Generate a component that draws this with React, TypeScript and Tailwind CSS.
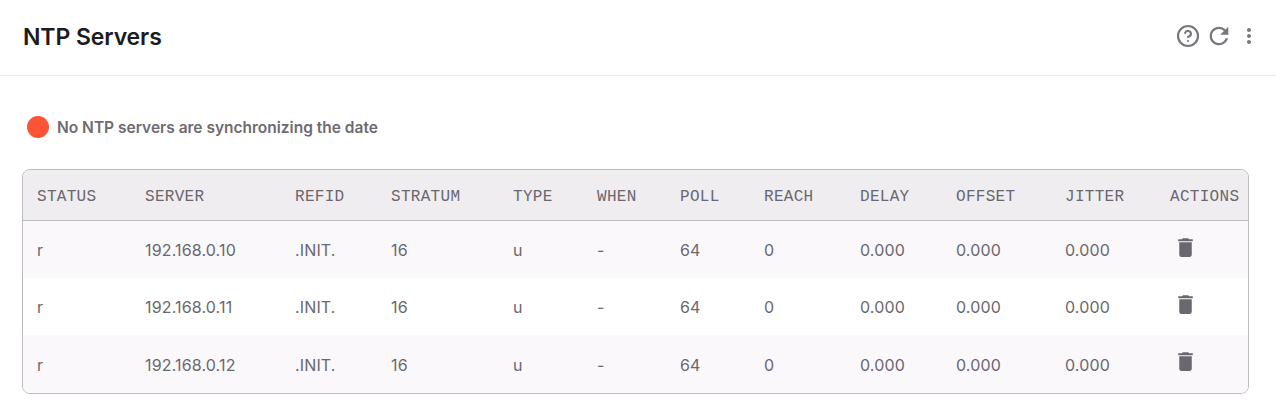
import { LuCircleHelp } from "react-icons/lu";
import { MdDelete, MdMoreVert, MdRefresh } from "react-icons/md";

const columns = [
  { label: "STATUS", width: "w-[108px]" },
  { label: "SERVER", width: "w-[150px]" },
  { label: "REFID", width: "w-[96px]" },
  { label: "STRATUM", width: "w-[122px]" },
  { label: "TYPE", width: "w-[84px]" },
  { label: "WHEN", width: "w-[83px]" },
  { label: "POLL", width: "w-[84px]" },
  { label: "REACH", width: "w-[96px]" },
  { label: "DELAY", width: "w-[96px]" },
  { label: "OFFSET", width: "w-[109px]" },
  { label: "JITTER", width: "w-[105px]" },
  { label: "ACTIONS", width: "" },
];

const servers = ["192.168.0.10", "192.168.0.11", "192.168.0.12"];

const App = () => {
  return (
    <div className="w-[1276px] h-[418px] bg-white font-['Inter',sans-serif] overflow-hidden">
      {/* Header */}
      <div className="flex items-center justify-between h-[76px] pl-[23px] pr-[15px] border-b border-[#e9e9ec]">
        <h1 className="text-[23px] font-semibold text-[#1c1b1f] tracking-[-0.1px]">NTP Servers</h1>
        <div className="flex items-center gap-[4.5px] -mt-[3px] text-[#79767d]">
          <LuCircleHelp size={24} strokeWidth={2.2} />
          <MdRefresh size={28} />
          <MdMoreVert size={24} />
        </div>
      </div>

      <div className="pt-[39px] px-[22px]">
        {/* Status */}
        <div className="flex items-center h-[24px] pl-[5px]">
          <span className="w-[22px] h-[22px] rounded-full bg-[#ff5338]" />
          <span className="ml-[8px] mt-[1px] text-[15.5px] font-semibold text-[#6d6a72]">
            No NTP servers are synchronizing the date
          </span>
        </div>

        {/* Table */}
        <div className="mt-[30px] w-[1227px] border border-[#bdbcbf] rounded-[8px] overflow-hidden">
          <table className="w-full table-fixed border-collapse">
            <thead>
              <tr className="h-[50px] bg-[#efedf0] border-b border-[#bdbcbf]">
                {columns.map((col) => (
                  <th
                    key={col.label}
                    className={`${col.width} pl-[14px] pt-[4px] text-left font-normal text-[16px] tracking-[0.3px] text-[#6a676e] font-['Liberation_Mono',monospace]`}
                  >
                    {col.label}
                  </th>
                ))}
              </tr>
            </thead>
            <tbody className="text-[16px] tracking-[0.15px] text-[#6a676e]">
              {servers.map((server, i) => (
                <tr key={server} className={`h-[57.6px] ${i % 2 === 0 ? "bg-[#faf8fb]" : "bg-white"}`}>
                  <td className="pl-[14px] pt-[2px]">r</td>
                  <td className="pl-[14px] pt-[2px]">{server}</td>
                  <td className="pl-[14px] pt-[2px]">.INIT.</td>
                  <td className="pl-[14px] pt-[2px]">16</td>
                  <td className="pl-[14px] pt-[2px]">u</td>
                  <td className="pl-[14px] pt-[2px]">-</td>
                  <td className="pl-[14px] pt-[2px]">64</td>
                  <td className="pl-[14px] pt-[2px]">0</td>
                  <td className="pl-[14px] pt-[2px]">0.000</td>
                  <td className="pl-[14px] pt-[2px]">0.000</td>
                  <td className="pl-[14px] pt-[2px]">0.000</td>
                  <td className="pl-[14px]">
                    <MdDelete size={25} className="text-[#6a676e] -mt-[4px] ml-[3px]" />
                  </td>
                </tr>
              ))}
            </tbody>
          </table>
        </div>
      </div>
    </div>
  );
};

export default App;
